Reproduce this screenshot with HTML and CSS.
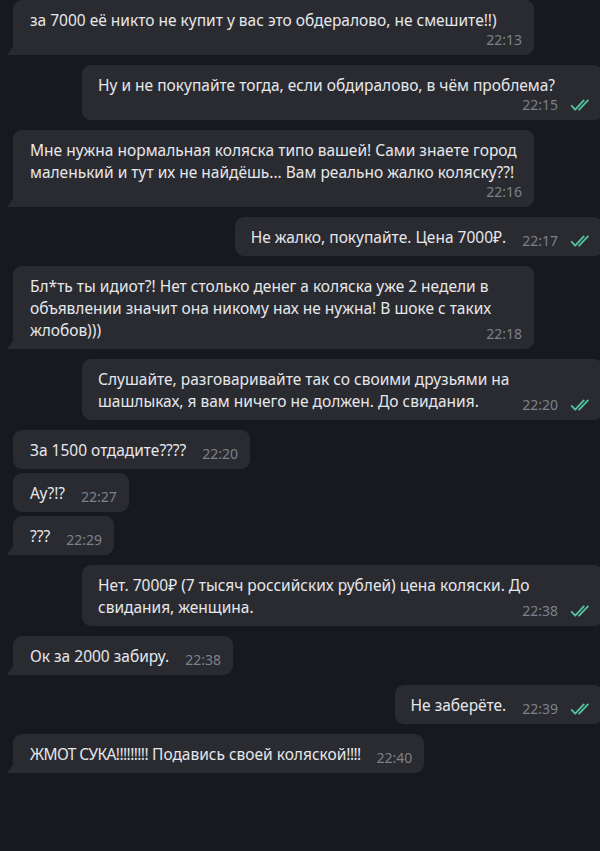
FILE: index.html
```html
<!DOCTYPE html>
<html lang="ru">
<head>
    <meta charset="UTF-8">
    <meta name="viewport" content="width=device-width, initial-scale=1.0">
    <title>Чат</title>
    <link rel="stylesheet" href="styles.css">
</head>
<body>

<div class="chat">

    <div class="msg in wide tail">
        за 7000 её никто не купит у вас это обдералово, не смешите!!)
        <div class="meta row"><span class="time">22:13</span></div>
    </div>

    <div class="msg out wide">
        Ну и не покупайте тогда, если обдиралово, в чём проблема?
        <div class="meta row"><span class="time">22:15</span><svg class="check" viewBox="0 0 22 14"><path d="M1.5 7.5l3.8 4L14.5 1.5M9.5 11.5l9.5-10"/></svg></div>
    </div>

    <div class="msg in wide tail">
        Мне нужна нормальная коляска типо вашей! Сами знаете город<br>маленький и тут их не найдёшь... Вам реально жалко коляску??!
        <div class="meta row"><span class="time">22:16</span></div>
    </div>

    <div class="msg out">
        Не жалко, покупайте. Цена 7000₽.
        <span class="meta"><span class="time">22:17</span><svg class="check" viewBox="0 0 22 14"><path d="M1.5 7.5l3.8 4L14.5 1.5M9.5 11.5l9.5-10"/></svg></span>
    </div>

    <div class="msg in wide tail">
        Бл*ть ты идиот?! Нет столько денег а коляска уже 2 недели в<br>объявлении значит она никому нах не нужна! В шоке с таких<br>жлобов)))
        <span class="meta"><span class="time">22:18</span></span>
    </div>

    <div class="msg out wide">
        Слушайте, разговаривайте так со своими друзьями на<br>шашлыках, я вам ничего не должен. До свидания.
        <span class="meta"><span class="time">22:20</span><svg class="check" viewBox="0 0 22 14"><path d="M1.5 7.5l3.8 4L14.5 1.5M9.5 11.5l9.5-10"/></svg></span>
    </div>

    <div class="msg in">
        За 1500 отдадите????
        <span class="meta"><span class="time">22:20</span></span>
    </div>

    <div class="msg in grouped">
        Ау?!?
        <span class="meta"><span class="time">22:27</span></span>
    </div>

    <div class="msg in grouped tail">
        ???
        <span class="meta"><span class="time">22:29</span></span>
    </div>

    <div class="msg out wide">
        Нет. 7000₽ (7 тысяч российских рублей) цена коляски. До<br>свидания, женщина.
        <span class="meta"><span class="time">22:38</span><svg class="check" viewBox="0 0 22 14"><path d="M1.5 7.5l3.8 4L14.5 1.5M9.5 11.5l9.5-10"/></svg></span>
    </div>

    <div class="msg in tail">
        Ок за 2000 забиру.
        <span class="meta"><span class="time">22:38</span></span>
    </div>

    <div class="msg out">
        Не заберёте.
        <span class="meta"><span class="time">22:39</span><svg class="check" viewBox="0 0 22 14"><path d="M1.5 7.5l3.8 4L14.5 1.5M9.5 11.5l9.5-10"/></svg></span>
    </div>

    <div class="msg in tail">
        <span class="shout">ЖМОТ СУКА!!!!!!!!!</span> Подавись своей коляской<span class="shout">!!!!</span>
        <span class="meta"><span class="time">22:40</span></span>
    </div>

</div>

</body>
</html>
```

FILE: styles.css
```css
body {
    margin: 0;
    background-color: #18191e;
    font-family: 'Noto Sans', 'Open Sans', sans-serif;
    color: #e6e7ea;
    overflow: hidden;
    min-height: 100vh;
}

.chat {
    display: flex;
    flex-direction: column;
    align-items: flex-start;
    padding: 0 0 0 13px;
}

.msg {
    position: relative;
    display: flow-root;
    box-sizing: border-box;
    max-width: 521px;
    margin-top: 10px;
    padding: 9px 12px 6px 17px;
    background-color: #2a2b31;
    border-radius: 9px;
    font-size: 15.5px;
    line-height: 22px;
}

.msg:first-child {
    margin-top: 0;
}

.msg.grouped {
    margin-top: 4px;
}

.msg.wide {
    width: 521px;
}

.msg.out {
    align-self: flex-end;
    margin-right: -3px;
    padding-left: 16px;
}

/* little tail at the bottom left of the last incoming message */
.msg.in.tail {
    border-bottom-left-radius: 0;
}

.msg.in.tail::before {
    content: "";
    position: absolute;
    left: -6px;
    bottom: 0;
    border-bottom: 10px solid #2a2b31;
    border-left: 7px solid transparent;
}

.shout {
    letter-spacing: -0.6px;
}

.meta {
    float: right;
    display: flex;
    align-items: center;
    height: 18px;
    margin: 6px 0 0 16px;
}

.meta.row {
    float: none;
    justify-content: flex-end;
    margin: 0;
}

.time {
    font-size: 14px;
    line-height: 18px;
    color: #7c818b;
}

.check {
    width: 21px;
    height: 13px;
    margin-left: 12px;
    fill: none;
    stroke: #55c39a;
    stroke-width: 2;
    stroke-linecap: round;
    stroke-linejoin: round;
}
```
